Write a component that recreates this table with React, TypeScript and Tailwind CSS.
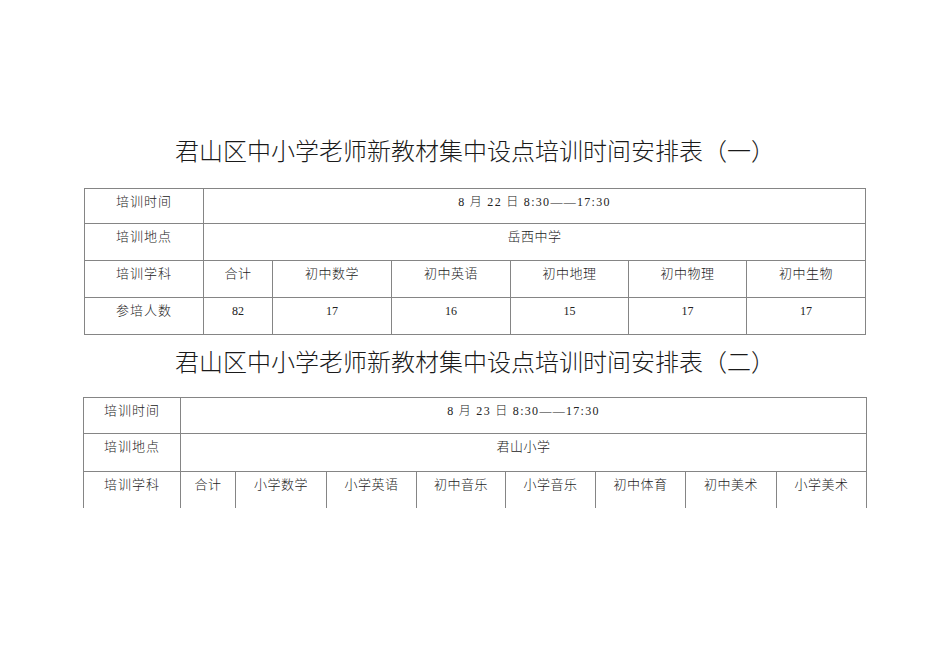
const font = { fontFamily: "'Liberation Serif', 'Noto Sans CJK SC', serif" };

type Sheet = {
  title: string;
  date: string;
  place: string;
  cols: number[];
  rows: string[];
  subjects: string[];
  counts?: string[];
};

const sheets: Sheet[] = [
  {
    title: '君山区中小学老师新教材集中设点培训时间安排表（一）',
    date: '8 月 22 日 8:30——17:30',
    place: '岳西中学',
    cols: [119, 69, 119, 119, 118, 118, 119],
    rows: ['h-[35px]', 'h-[37px]', 'h-[37px]'],
    subjects: ['合计', '初中数学', '初中英语', '初中地理', '初中物理', '初中生物'],
    counts: ['82', '17', '16', '15', '17', '17'],
  },
  {
    title: '君山区中小学老师新教材集中设点培训时间安排表（二）',
    date: '8 月 23 日 8:30——17:30',
    place: '君山小学',
    cols: [97, 55, 91, 90, 89, 90, 90, 91, 90],
    rows: ['h-[36px]', 'h-[38px]', 'h-[36px]'],
    subjects: ['合计', '小学数学', '小学英语', '初中音乐', '小学音乐', '初中体育', '初中美术', '小学美术'],
  },
];

function Schedule({ sheet, last }: { sheet: Sheet; last: boolean }) {
  const span = sheet.cols.length - 1;
  const cell = 'border border-[#858585] align-top text-center pt-[5px] leading-[16px] px-0';
  return (
    <div className="flex flex-col items-center">
      <h1
        className={`text-[24px] leading-[32px] font-light text-[#1a1a1a] ${last ? 'mb-[18px]' : 'mb-[20px]'}`}
      >
        {sheet.title}
      </h1>
      <table
        className="table-fixed border-collapse text-[13px] text-[#222]"
        style={{ width: sheet.cols.reduce((a, b) => a + b, 0) }}
      >
        <colgroup>
          {sheet.cols.map((w, i) => (
            <col key={i} style={{ width: w }} />
          ))}
        </colgroup>
        <tbody>
          <tr className={sheet.rows[0]}>
            <td className={`${cell} pt-[3px] tracking-[1px] font-light`}>培训时间</td>
            <td colSpan={span} className={`${cell} pt-[3px] text-[12px] tracking-[1.3px] whitespace-pre font-light`}>
              {sheet.date}
            </td>
          </tr>
          <tr className={sheet.rows[1]}>
            <td className={`${cell} tracking-[1px] font-light`}>培训地点</td>
            <td colSpan={span} className={`${cell} tracking-[0.5px] font-light`}>
              {sheet.place}
            </td>
          </tr>
          <tr className={sheet.rows[2]}>
            <td className={`${cell} tracking-[1px] font-light ${last ? 'border-b-0' : ''}`}>培训学科</td>
            {sheet.subjects.map((s) => (
              <td
                key={s}
                className={`${cell} tracking-[0.5px] font-light ${last ? 'border-b-0' : ''}`}
              >
                {s}
              </td>
            ))}
          </tr>
          {sheet.counts && (
            <tr className="h-[37px]">
              <td className={`${cell} tracking-[1px] font-light`}>参培人数</td>
              {sheet.counts.map((c, i) => (
                <td key={i} className={`${cell} text-[12px]`}>
                  {c}
                </td>
              ))}
            </tr>
          )}
        </tbody>
      </table>
    </div>
  );
}

export default function App() {
  return (
    <div className="w-[950px] h-[672px] bg-white overflow-hidden" style={font}>
      <div className="pt-[136px] flex flex-col gap-[12px]">
        {sheets.map((s, i) => (
          <Schedule key={i} sheet={s} last={i === sheets.length - 1} />
        ))}
      </div>
    </div>
  );
}
